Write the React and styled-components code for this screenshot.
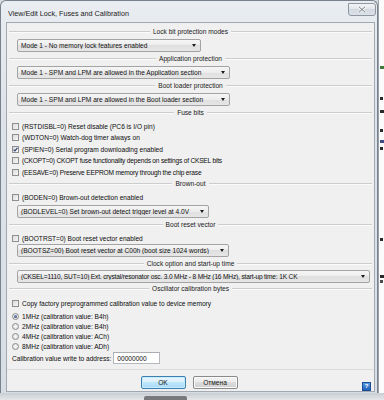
import styled, { createGlobalStyle } from "styled-components";

//<------------------------------ styling ------------------------------>

const GlobalStyle = createGlobalStyle`
  html, body {
    margin: 0;
    padding: 0;
    background: #d9dde1;
  }
  body {
    font-family: "Liberation Sans", Arial, sans-serif;
  }
`;

const Screen = styled.div`
  width: 384px;
  height: 400px;
  overflow: hidden;
  display: flex;
  flex-direction: column;
  background: #d9dde1;
`;

const Stage = styled.div`
  display: flex;
  height: 393px;
`;

const Window = styled.div`
  width: 378px;
  height: 393px;
  box-sizing: border-box;
  display: flex;
  flex-direction: column;
  border: 1px solid #79828c;
  border-bottom: none;
  border-radius: 6px 6px 0 0;
  background: linear-gradient(#e9edf1, #dde3e9 30%, #d7dee5);
`;

const TitleBar = styled.div`
  height: 21px;
  display: flex;
  align-items: flex-start;
  padding: 2px 1px 0 7px;
  box-sizing: border-box;
`;

const Title = styled.div`
  flex: 1;
  margin-top: 5px;
  font-size: 7.2px;
  line-height: 12px;
  color: #1b1b1b;
`;

const CloseButton = styled.div`
  width: 28px;
  height: 13px;
  box-sizing: border-box;
  border: 1px solid #8d96a1;
  border-radius: 0 3px 3px 3px;
  background: linear-gradient(#f3f5f7, #dfe4ea 50%, #d2d9e0 50%, #dbe1e7);
  display: flex;
  align-items: center;
  justify-content: center;
`;

const Frame = styled.div`
  display: flex;
  flex: 1;
  padding: 0 1px 1px 5px;
`;

const Client = styled.div`
  width: 369px;
  box-sizing: border-box;
  border: 1px solid #a2a9b1;
  background: #f0f0f0;
  display: flex;
  flex-direction: column;
  padding-top: 3px;
  font-size: 6.6px;
  color: #0c0c0c;
`;

const GroupTitle = styled.div`
  height: 12px;
  margin-top: ${p => p.$mt || 0}px;
  padding: 0 2px;
  display: flex;
  align-items: center;
  color: #1a1a1a;

  &::before, &::after {
    content: "";
    flex: 1;
    height: 0;
    border-top: 1px solid #cdcdcd;
    border-bottom: 1px solid #fbfbfb;
  }

  span {
    margin: 0 3px;
    line-height: 12px;
  }
`;

const Combo = styled.div`
  width: ${p => p.$w}px;
  height: 13px;
  margin: ${p => p.$mt || 0}px 0 0 10px;
  box-sizing: border-box;
  border: 1px solid #a3a3a3;
  border-radius: 2px;
  background: linear-gradient(#f6f6f6, #ececec 50%, #dfdfdf 50%, #e6e6e6);
  display: flex;
  align-items: center;
  padding: 0 4px 0 3px;
  color: #111;
  letter-spacing: ${p => p.$ls || 0}px;

  span {
    flex: 1;
    white-space: nowrap;
    overflow: hidden;
  }

  &::after {
    content: "";
    border-left: 2.5px solid transparent;
    border-right: 2.5px solid transparent;
    border-top: 3px solid #1c1c1c;
  }
`;

const CheckRow = styled.div`
  height: ${p => p.$h || 11.5}px;
  margin: ${p => p.$mt || 0}px 0 0 5px;
  display: flex;
  align-items: center;
  white-space: nowrap;
  letter-spacing: ${p => p.$ls || 0}px;
`;

const Box = styled.div`
  width: 7px;
  height: 7px;
  box-sizing: border-box;
  margin-right: 3px;
  border: 1px solid #8f8f8f;
  background: linear-gradient(135deg, #dcdcdc, #f7f7f7);
  display: flex;
  align-items: center;
  justify-content: center;
`;

const Radio = styled(Box)`
  border-radius: 50%;
  border-color: #8c8c8c;
  background: radial-gradient(circle, #fafafa, #d9d9d9);

  &::after {
    content: "";
    display: ${p => (p.$on ? "block" : "none")};
    width: 3px;
    height: 3px;
    border-radius: 50%;
    background: radial-gradient(circle at 35% 35%, #7a95c4, #1f3565);
  }
`;

const CalibRow = styled.div`
  height: 11.5px;
  margin: 1.5px 0 0 5px;
  display: flex;
  align-items: center;
  gap: 2px;
  white-space: nowrap;
`;

const AddressInput = styled.div`
  width: 47px;
  height: 11.5px;
  box-sizing: border-box;
  border: 1px solid #b5b8bd;
  border-top-color: #abadb3;
  background: #fff;
  padding-left: 3px;
  display: flex;
  align-items: center;
`;

const Footer = styled.div`
  margin-top: auto;
  height: 22px;
  box-sizing: border-box;
  border-top: 1px solid #dadada;
  padding-top: 6px;
  display: grid;
  grid-template-columns: 1fr auto 1fr;
  align-items: start;
`;

const Buttons = styled.div`
  display: flex;
  gap: 7px;
  margin-left: -3px;
`;

const Button = styled.div`
  width: 45px;
  height: 13px;
  box-sizing: border-box;
  border-radius: 2px;
  display: flex;
  align-items: center;
  justify-content: center;
  color: #111;
  border: 1px solid ${p => (p.$default ? "#3c7fb1" : "#8a8a8a")};
  background: ${p =>
    p.$default
      ? "linear-gradient(#eaf6fd, #d9f0fc 50%, #bee6fd 50%, #a7d9f5)"
      : "linear-gradient(#f2f2f2, #ebebeb 50%, #dddddd 50%, #cfcfcf)"};
  box-shadow: ${p => (p.$default ? "inset 0 0 0 1px #c8ecfd" : "inset 0 0 0 1px #fbfbfb")};
`;

const Help = styled.div`
  justify-self: end;
  margin: 6px 3px 0 0;
  width: 7px;
  height: 7px;
  background: linear-gradient(#5b9be0, #1f5fb8);
  border: 0.5px solid #1a4e98;
  color: #fff;
  font-size: 6px;
  font-weight: bold;
  line-height: 7px;
  text-align: center;
`;

const Outside = styled.div`
  flex: 1;
  background: #fbfbfb;
  border-left: 1px solid #9aa3ad;
  display: flex;
  flex-direction: column;
  padding-left: 1px;
`;

const Scrap = styled.div`
  margin-top: ${p => p.$mt}px;
  width: ${p => p.$w}px;
  height: ${p => p.$h || 3}px;
  background: ${p => p.$c || "#2a2a2a"};
`;

const Bottom = styled.div`
  height: 7px;
  display: flex;
  padding-left: 144px;
  background: linear-gradient(#c9ced3, #e4e6e8);
`;

const Tab = styled.div`
  margin-top: 3px;
  width: 43px;
  height: 4px;
  background: #77797c;
  border-radius: 2px 2px 0 0;
`;

//<------------------------------ markup ------------------------------>

const CheckMark = () => (
  <svg width="5" height="5" viewBox="0 0 5 5">
    <path d="M0.6 2.6 L1.9 3.9 L4.4 0.8" fill="none" stroke="#2b3f73" strokeWidth="1.1" />
  </svg>
);

const Check = ({ mt, ls, on, children }) => (
  <CheckRow $mt={mt} $ls={ls}>
    <Box>{on && <CheckMark />}</Box>
    {children}
  </CheckRow>
);

const Option = ({ mt, on, children }) => (
  <CheckRow $mt={mt} $h={9.8}>
    <Radio $on={on} />
    {children}
  </CheckRow>
);

const Group = ({ mt, children }) => (
  <GroupTitle $mt={mt}>
    <span>{children}</span>
  </GroupTitle>
);

export default function App() {
  return (
    <Screen>
      <GlobalStyle />
      <Stage>
        <Window>
          <TitleBar>
            <Title>View/Edit Lock, Fuses and Calibration</Title>
            <CloseButton>
              <svg width="8" height="7" viewBox="0 0 8 7">
                <path d="M1 0.8 L7 6.2 M7 0.8 L1 6.2" stroke="#fff" strokeWidth="2.2" />
                <path d="M1 0.8 L7 6.2 M7 0.8 L1 6.2" stroke="#6d737a" strokeWidth="1" />
              </svg>
            </CloseButton>
          </TitleBar>
          <Frame>
            <Client>
              <Group>Lock bit protection modes</Group>
              <Combo $w={184} $mt={0.5}><span>Mode 1 - No memory lock features enabled</span></Combo>

              <Group mt={1.5}>Application protection</Group>
              <Combo $w={213} $mt={0.5}><span>Mode 1 - SPM and LPM are allowed in the Application section</span></Combo>

              <Group mt={1.5}>Boot loader protection</Group>
              <Combo $w={213} $mt={0.5}><span>Mode 1 - SPM and LPM are allowed in the Boot loader section</span></Combo>

              <Group mt={1.5}>Fuse bits</Group>
              <Check mt={1.5}>(RSTDISBL=0) Reset disable (PC6 is I/O pin)</Check>
              <Check>(WDTON=0) Watch-dog timer always on</Check>
              <Check on>(SPIEN=0) Serial program downloading enabled</Check>
              <Check ls={-0.2}>(CKOPT=0) CKOPT fuse functionality depends on settings of CKSEL bits</Check>
              <Check ls={-0.18}>(EESAVE=0) Preserve EEPROM memory through the chip erase</Check>

              <Group>Brown-out</Group>
              <Check mt={2}>(BODEN=0) Brown-out detection enabled</Check>
              <Combo $w={192} $mt={1.5}><span>(BODLEVEL=0) Set brown-out detect trigger level at 4.0V</span></Combo>

              <Group mt={0.5}>Boot reset vector</Group>
              <Check mt={1.75}>(BOOTRST=0) Boot reset vector enabled</Check>
              <Combo $w={212} $mt={0.25}><span>(BOOTSZ=00) Boot reset vector at C00h (boot size 1024 words)</span></Combo>

              <Group mt={1}>Clock option and start-up time</Group>
              <Combo $w={353} $ls={-0.17}>
                <span>(CKSEL=1110, SUT=10) Ext. crystal/resonator osc. 3.0 MHz - 8 MHz (16 MHz), start-up time: 1K CK</span>
              </Combo>

              <Group>Oscillator calibration bytes</Group>
              <Check mt={2.25}>Copy factory preprogrammed calibration value to device memory</Check>
              <Option mt={3} on>1MHz (calibration value: B4h)</Option>
              <Option>2MHz (calibration value: B4h)</Option>
              <Option>4MHz (calibration value: ACh)</Option>
              <Option>8MHz (calibration value: ADh)</Option>
              <CalibRow>
                Calibration value write to address:
                <AddressInput>00000000</AddressInput>
              </CalibRow>

              <Footer>
                <div />
                <Buttons>
                  <Button $default>OK</Button>
                  <Button>Отмена</Button>
                </Buttons>
                <Help>?</Help>
              </Footer>
            </Client>
          </Frame>
        </Window>
        <Outside>
          <Scrap $mt={66} $w={4} $c="#3f7a3a" />
          <Scrap $mt={28} $w={3} />
          <Scrap $mt={10} $w={4} />
          <Scrap $mt={16} $w={3} />
          <Scrap $mt={8} $w={4} $c="#404a8a" />
          <Scrap $mt={4} $w={3} />
          <Scrap $mt={88} $w={3} />
          <Scrap $mt={34} $w={4} />
          <Scrap $mt={2} $w={3} $c="#4a4a4a" />
        </Outside>
      </Stage>
      <Bottom>
        <Tab />
      </Bottom>
    </Screen>
  );
}
